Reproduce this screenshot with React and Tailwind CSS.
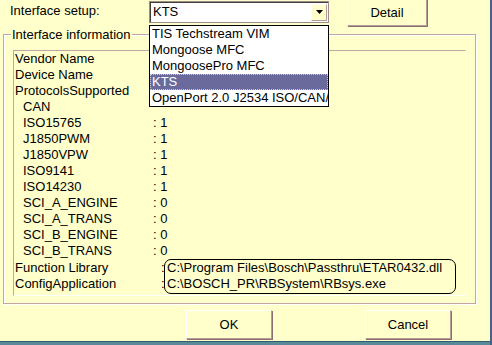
import React from 'react';

const protocols = [
  ['CAN', ''],
  ['ISO15765', ': 1'],
  ['J1850PWM', ': 1'],
  ['J1850VPW', ': 1'],
  ['ISO9141', ': 1'],
  ['ISO14230', ': 1'],
  ['SCI_A_ENGINE', ': 0'],
  ['SCI_A_TRANS', ': 0'],
  ['SCI_B_ENGINE', ': 0'],
  ['SCI_B_TRANS', ': 0'],
];

const interfaces = [
  'TIS Techstream VIM',
  'Mongoose MFC',
  'MongoosePro MFC',
  'KTS',
  'OpenPort 2.0 J2534 ISO/CAN/',
];

function WinButton({ children, className = '' }) {
  return (
    <button
      className={`bg-[#ffffcc] border border-t-white border-l-white border-r-[#b89a9a] border-b-[#b89a9a] shadow-[1px_1px_0_#8a7070] flex items-center justify-center ${className}`}
    >
      {children}
    </button>
  );
}

export default function App() {
  return (
    <div className="w-[492px] h-[345px] bg-[#ffffcc] flex overflow-hidden font-['Liberation_Sans',Arial,sans-serif] text-[13px] leading-[16px] text-black">
      <div className="flex-1 flex flex-col relative">
        {/* top row */}
        <div className="h-[30px] flex items-start">
          <span className="ml-[10px] mt-[3px] w-[139px]">Interface setup:</span>
          <div className="mt-[1px] w-[180px] h-[22px] bg-white border border-[#a08a8a] shadow-[inset_1px_1px_0_#404040] flex items-center">
            <span className="ml-[3px] flex-1">KTS</span>
            <div className="w-[16px] h-[17px] mr-[1px] bg-[#ffffcc] border border-t-white border-l-white border-r-[#b89a9a] border-b-[#b89a9a] flex items-center justify-center">
              <svg width="7" height="4" viewBox="0 0 7 4"><path d="M0 0h7L3.5 4z" fill="#000" /></svg>
            </div>
          </div>
          <WinButton className="ml-[18px] -mt-[1px] w-[80px] h-[27px]">Detail</WinButton>
        </div>

        {/* dropdown list */}
        <div className="absolute left-[149px] top-[25px] w-[180px] bg-white border border-black z-10">
          {interfaces.map((name) => (
            <div
              key={name}
              className={`h-[16px] pl-[2px] whitespace-nowrap overflow-hidden ${name === 'KTS' ? 'bg-[#6a6a9c] text-white outline outline-1 outline-dotted outline-[#cccccc] -outline-offset-1' : ''}`}
            >
              {name}
            </div>
          ))}
        </div>

        {/* group box */}
        <div className="relative ml-[3px] mt-[4px] w-[473px] h-[270px] border border-[#c4a4a4] shadow-[inset_1px_1px_0_#fff,1px_1px_0_#fff] pt-[15px] pl-[9px] pr-[9px] pb-[7px]">
          <span className="absolute left-[7px] -top-[8px] px-[1px] bg-[#ffffcc]">Interface information</span>
          <div className="h-full border border-t-[#c4a4a4] border-l-[#c4a4a4] border-r-white border-b-white pl-[1px] pt-0">
            <div className="h-[16px]">Vendor Name</div>
            <div className="h-[16px]">Device Name</div>
            <div className="h-[16px]">ProtocolsSupported</div>
            {protocols.map(([name, val]) => (
              <div key={name} className="h-[16px] flex">
                <span className="w-[138px] pl-[8px]">{name}</span>
                <span>{val}</span>
              </div>
            ))}
            <div className="flex mt-[1px]">
              <div className="w-[146px]">
                <div className="h-[16px]">Function Library</div>
                <div className="h-[16px]">ConfigApplication</div>
              </div>
              <div className="w-[3px]">
                <div className="h-[16px]">:</div>
                <div className="h-[16px]">:</div>
              </div>
              <div className="w-[292px] -mt-[1px] border border-black rounded-[7px] pl-[2px] pb-[1px]">
                <div className="h-[16px]">C:\Program Files\Bosch\Passthru\ETAR0432.dll</div>
                <div className="h-[16px]">C:\BOSCH_PR\RBSystem\RBsys.exe</div>
              </div>
            </div>
          </div>
        </div>

        {/* buttons */}
        <div className="flex mt-[6px] h-[30px]">
          <WinButton className="ml-[186px] w-[86px] h-[29px]">OK</WinButton>
          <WinButton className="ml-[93px] w-[86px] h-[29px]">Cancel</WinButton>
        </div>

        <div className="mt-auto h-[4px] bg-[#5a8a9a] border-t border-[#2f5f6f]" />
      </div>
      <div className="w-[2px] bg-[#46627e]" />
    </div>
  );
}
